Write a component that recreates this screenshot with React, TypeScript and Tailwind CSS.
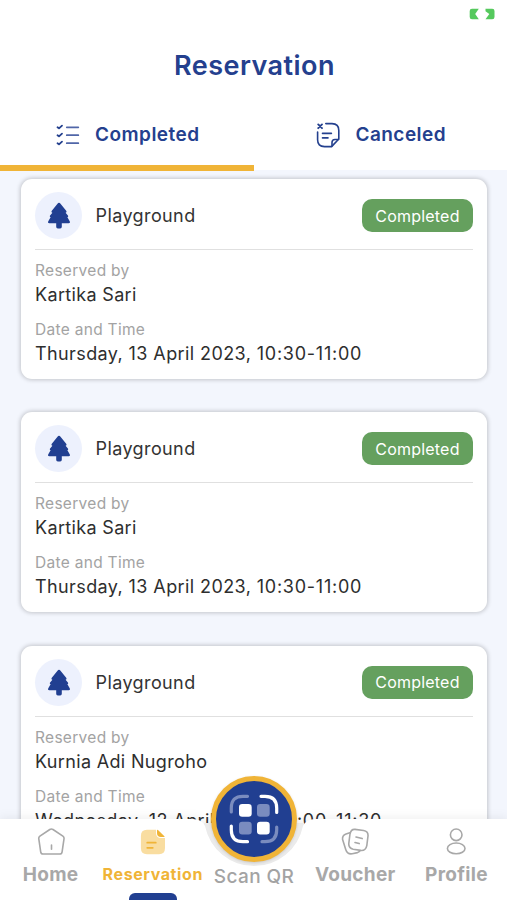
import type { ReactNode } from "react";

type Reservation = {
  id: number;
  place: string;
  name: string;
  date: string;
  time: string;
  status: string;
};

const RESERVATIONS: Reservation[] = [
  { id: 1, place: "Playground", name: "Kartika Sari", date: "Thursday, 13 April 2023", time: "10:30-11:00", status: "Completed" },
  { id: 2, place: "Playground", name: "Kartika Sari", date: "Thursday, 13 April 2023", time: "10:30-11:00", status: "Completed" },
  { id: 3, place: "Playground", name: "Kurnia Adi Nugroho", date: "Wednesday, 12 April 2023", time: "10:00-11:30", status: "Completed" },
];

function BatteryIcon() {
  return (
    <svg width="26" height="12" viewBox="0 0 26 12" fill="#55c95d">
      <path d="M3 0.7H9.8L6.2 6L9.8 11.3H3Q0.7 11.3 0.7 9V3Q0.7 0.7 3 0.7Z" />
      <path d="M16.5 0.7H23.2Q25.5 0.7 25.5 3V9Q25.5 11.3 23.2 11.3H16.5L20.3 6L16.5 3.2Z" />
    </svg>
  );
}

function ChecklistIcon() {
  return (
    <svg width="24" height="24" viewBox="0 0 24 24" fill="none" stroke="#24408e" strokeLinecap="round" strokeLinejoin="round">
      <path strokeWidth="1.8" d="M1.5 4.2L3 5.4L6 2.6M1.5 12.2L3 13.4L6 10.6M1.5 20.2L3 21.4L6 18.6" />
      <path strokeWidth="1.8" stroke="#5066a8" d="M10.8 4.3H22.3M10.8 12.2H22.3M10.8 20.2H22.3" />
    </svg>
  );
}

function CanceledIcon() {
  return (
    <svg width="24" height="26" viewBox="0 0 24 26" fill="none" stroke="#24408e" strokeLinecap="round" strokeLinejoin="round">
      <path strokeWidth="1.9" d="M2.2 2.4L6 6.2M6 2.4L2.2 6.2" />
      <path strokeWidth="1.6" d="M9.8 1.6H16Q22.8 1.6 22.8 8.4V17L15.6 24.6H8.5Q1.6 24.6 1.6 17.8V10" />
      <path strokeWidth="1.6" d="M22.5 17.5H19Q16 17.5 16 20.5V24M6.5 11.4H15.4M6.5 15.9H12" />
    </svg>
  );
}

function TreeIcon() {
  return (
    <svg width="24" height="27" viewBox="0 0 24 27" fill="#213f91">
      <path d="M12 0.7C12.6 0.7 13 1 13.5 1.7L19.2 8.8C19.9 9.8 19.5 10.5 18.6 10.7L20.9 13.4C21.5 14.3 21.2 14.9 20.3 15.1L22.7 19.3C23.3 20.5 22.9 21.3 21.7 21.3H14.8V24.8Q14.8 26.5 13.2 26.5H10.8Q9.2 26.5 9.2 24.8V21.3H2.3C1.1 21.3 0.7 20.5 1.3 19.3L3.7 15.1C2.8 14.9 2.5 14.3 3.1 13.4L5.4 10.7C4.5 10.5 4.1 9.8 4.8 8.8L10.5 1.7C11 1 11.4 0.7 12 0.7Z" />
    </svg>
  );
}

function HomeIcon() {
  return (
    <svg width="28" height="28" viewBox="0 0 28 28" fill="none" stroke="#a8a8a8" strokeWidth="1.6" strokeLinecap="round" strokeLinejoin="round">
      <path d="M12.8 1.5Q14.4 0.6 16 1.5L25.9 8.2Q27.3 9.2 27 10.8L25.1 23.8Q24.8 26 22.6 26H6.2Q4 26 3.7 23.8L1.8 10.8Q1.5 9.2 2.9 8.2Z" />
      <path d="M14.5 17V21.2" />
    </svg>
  );
}

function NoteIcon() {
  return (
    <svg width="26" height="26" viewBox="0 0 26 26">
      <path fill="#f9dda0" d="M7 0.8H16V3.8Q16 9 21.2 9H25V19Q25 25.2 19 25.2H7Q0.9 25.2 0.9 19V7Q0.9 0.8 7 0.8Z" />
      <path fill="#f0b437" d="M17 1.6Q17 0.2 18 1.1L24.4 7.2Q25.2 8 24 8H21Q17 8 17 4Z" />
      <path fill="none" stroke="#f0b437" strokeWidth="1.7" strokeLinecap="round" d="M7.2 13.7H15.8M7.2 18.8H12.8" />
    </svg>
  );
}

function VoucherIcon() {
  return (
    <svg width="28" height="28" viewBox="0 0 28 28" fill="none" stroke="#a8a8a8" strokeWidth="1.6" strokeLinecap="round" strokeLinejoin="round">
      <path d="M14 1.4L22.6 2.5Q27.4 3.3 27 8L25.8 17.6Q24.8 22.8 19.8 22.4L12.2 21.2Q7.4 20.2 7.8 15.4L9 6Q10 1 14 1.4Z" />
      <path d="M8.8 4.8L5 6Q1 7.5 1.6 11.6L4.8 21.8Q6.4 26.6 11.2 25.8L16.5 24.6Q18 24.2 19 22.8M15 9L21.2 10.6M14 14.5L18.2 15.6" />
    </svg>
  );
}

function ProfileIcon() {
  return (
    <svg width="28" height="28" viewBox="0 0 28 28" fill="none" stroke="#a8a8a8" strokeWidth="1.6">
      <circle cx="14.2" cy="6.8" r="5.8" />
      <ellipse cx="14.2" cy="20.4" rx="8.8" ry="5.4" />
    </svg>
  );
}

function ScanIcon() {
  return (
    <svg width="50" height="50" viewBox="0 0 50 50" fill="none" strokeWidth="3.2" strokeLinecap="round">
      <path stroke="#7a8cbf" d="M2.3 18V14Q2.3 2.3 14 2.3H18.5M47.7 33V36Q47.7 47.7 36 47.7H33" />
      <path stroke="#fff" d="M32 2.3H36Q47.7 2.3 47.7 14V18.5M2.3 32V36Q2.3 47.7 14 47.7H18.5" />
      <rect x="10" y="10" width="12.7" height="12.7" rx="3.2" fill="#fff" />
      <rect x="28" y="10" width="12.7" height="12.7" rx="3.2" fill="#7a8cbf" />
      <rect x="10" y="27.8" width="12.7" height="12.7" rx="3.2" fill="#7a8cbf" />
      <rect x="28" y="27.8" width="12.7" height="12.7" rx="3.2" fill="#fff" />
    </svg>
  );
}

function ReservationCard({ item }: { item: Reservation }) {
  return (
    <article className="h-[200px] shrink-0 rounded-[11px] bg-white px-3.5 pt-[13px] shadow-[0_0_4px_1px_rgba(0,0,0,0.2)]">
      <div className="flex h-[47px] items-center">
        <div className="flex size-[47px] items-center justify-center rounded-full bg-[#edf1fd]">
          <TreeIcon />
        </div>
        <h2 className="ml-[13.5px] text-[18px] tracking-[0.4px] text-[#333]">{item.place}</h2>
        <span className="ml-auto flex h-[33px] w-[111px] items-center justify-center rounded-[10px] bg-[#65a05e] text-[16px] tracking-[0.2px] text-white">
          {item.status}
        </span>
      </div>
      <div className="mt-2.5 h-px bg-[#e0e0e0]" />
      <p className="mt-2.5 text-[15.5px] leading-[22px] tracking-[0.3px] text-[#a3a3a3]">Reserved by</p>
      <p className="text-[18px] leading-[25px] tracking-[0.34px] text-[#2e2e2e]">{item.name}</p>
      <p className="mt-3 text-[15.5px] leading-[22px] tracking-[0.3px] text-[#a3a3a3]">Date and Time</p>
      <p className="text-[18px] leading-[25px] tracking-[0.4px] whitespace-nowrap text-[#2e2e2e]">
        {item.date}, <span className="tracking-[0.75px]">{item.time}</span>
      </p>
    </article>
  );
}

function NavItem({ icon, label }: { icon: ReactNode; label: string }) {
  return (
    <button type="button" className="flex flex-1 flex-col items-center pt-2 text-[19px] font-bold tracking-[0.3px] text-[#a8a8a8]">
      <span className="flex h-[30px] items-center">{icon}</span>
      <span className="mt-1.5 leading-6">{label}</span>
    </button>
  );
}

export default function App() {
  return (
    <div className="relative flex h-[900px] w-[507px] flex-col overflow-hidden bg-[#f3f6fd] font-['Inter',sans-serif]">
      <header className="h-[170px] shrink-0 bg-white text-[#24408e]">
        <div className="flex h-7 items-center justify-end pr-3">
          <BatteryIcon />
        </div>
        <h1 className="mt-[18px] pl-0.5 text-center text-[27px] leading-10 font-semibold tracking-[0.45px]">Reservation</h1>
        <div className="mt-6 flex h-[50px] text-[19px] font-semibold tracking-[0.45px]">
          <button type="button" className="flex w-1/2 items-center justify-center gap-[15px] pl-0.5">
            <ChecklistIcon />
            Completed
          </button>
          <button type="button" className="flex w-1/2 items-center justify-center gap-[15px] pl-0.5">
            <CanceledIcon />
            Canceled
          </button>
        </div>
        <div className="mt-[5px] h-1.5 w-[254px] bg-[#f0b437]" />
      </header>

      <main className="flex flex-1 flex-col gap-[33.3px] overflow-hidden px-5 pt-[9px] pl-[21px]">
        {RESERVATIONS.map((item) => (
          <ReservationCard key={item.id} item={item} />
        ))}
      </main>

      {/* Bottom bar, notched around the scan button */}
      <nav className="absolute inset-x-0 bottom-0 h-[81px]">
        <svg className="absolute inset-x-0 top-0 drop-shadow-[0_-2px_5px_rgba(0,0,0,0.06)]" width="507" height="81" viewBox="0 0 507 81">
          <path fill="#ebebeb" d="M204 4H304V52H204Z" />
          <path fill="#fff" d="M0 0H192Q202 0 205 7A50 50 0 0 0 303 7Q306 0 316 0H507V81H0Z" />
        </svg>
        <div className="relative flex h-full">
          <NavItem icon={<HomeIcon />} label="Home" />
          <button type="button" className="flex flex-1 flex-col items-center pt-2 pl-px text-[16px] font-bold tracking-[0.6px] text-[#f0b437]">
            <span className="flex h-[30px] items-center">
              <NoteIcon />
            </span>
            <span className="mt-[5px] leading-6">Reservation</span>
            <span className="mt-[7px] h-[7px] w-12 rounded-t-md bg-[#213f91]" />
          </button>
          <button type="button" className="flex flex-1 flex-col items-center pt-[46px] text-[19px] leading-6 font-medium tracking-[0.4px] text-[#a3a3a3]">
            Scan QR
          </button>
          <NavItem icon={<VoucherIcon />} label="Voucher" />
          <NavItem icon={<ProfileIcon />} label="Profile" />
        </div>
        <div className="absolute -top-[43px] left-[211px] flex size-[86px] items-center justify-center rounded-full border-[5px] border-[#f0b437] bg-[#213f91] shadow-[0_1px_3px_rgba(0,0,0,0.15)]">
          <ScanIcon />
        </div>
      </nav>
    </div>
  );
}
